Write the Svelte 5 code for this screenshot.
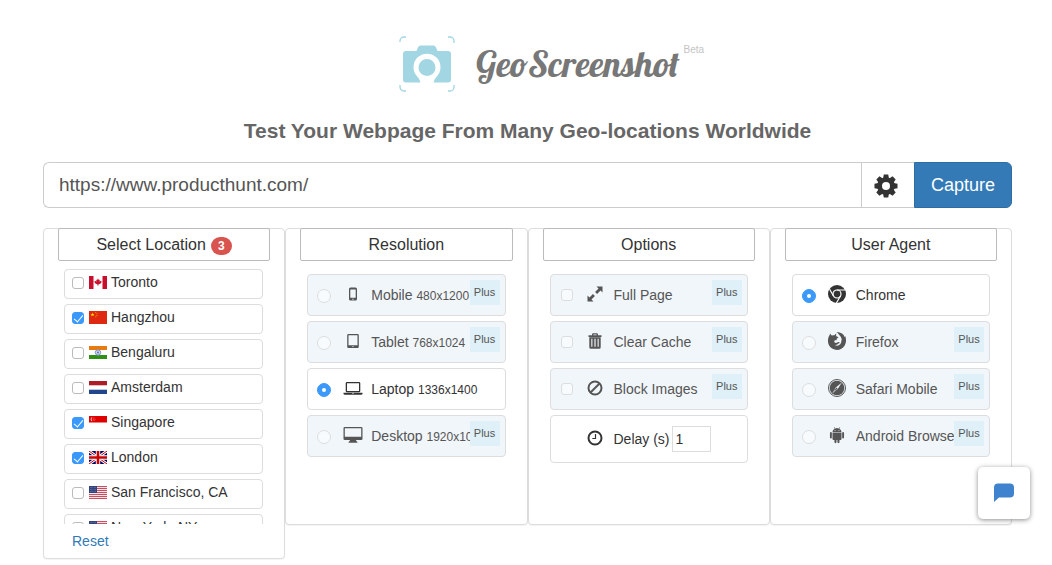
<script>
  let url = $state('https://www.producthunt.com/');
  let delay = $state('1');
  let resolution = $state('laptop');
  let agent = $state('chrome');

  let locations = $state([
    { name: 'Toronto', flag: 'ca', checked: false },
    { name: 'Hangzhou', flag: 'cn', checked: true },
    { name: 'Bengaluru', flag: 'in', checked: false },
    { name: 'Amsterdam', flag: 'nl', checked: false },
    { name: 'Singapore', flag: 'sg', checked: true },
    { name: 'London', flag: 'gb', checked: true },
    { name: 'San Francisco, CA', flag: 'us', checked: false },
    { name: 'New York, NY', flag: 'us', checked: false }
  ]);

  const resolutions = [
    { id: 'mobile', name: 'Mobile', size: '480x1200', plus: true },
    { id: 'tablet', name: 'Tablet', size: '768x1024', plus: true },
    { id: 'laptop', name: 'Laptop', size: '1336x1400', plus: false },
    { id: 'desktop', name: 'Desktop', size: '1920x1080', plus: true }
  ];

  const options = [
    { id: 'expand', name: 'Full Page' },
    { id: 'trash', name: 'Clear Cache' },
    { id: 'ban', name: 'Block Images' }
  ];

  const agents = [
    { id: 'chrome', name: 'Chrome', plus: false },
    { id: 'firefox', name: 'Firefox', plus: true },
    { id: 'safari', name: 'Safari Mobile', plus: true },
    { id: 'android', name: 'Android Browser', plus: true }
  ];

  const selected = $derived(locations.filter((l) => l.checked).length);

  function reset() {
    locations.forEach((l) => (l.checked = false));
  }
</script>

{#snippet flag(code)}
  <svg class="flag" viewBox="0 0 18 13" aria-hidden="true">
    {#if code === 'ca'}
      <rect width="18" height="13" fill="#fff" />
      <path d="M0 0h4.5v13H0zM13.500 0H18v13h-4.500z" fill="#c8102e" />
      <path d="M9 2.500l.9 1.600.9-.4-.3 2 1.300-.9.9.9-.8 1.500-2.300 1.300H9.300V10h-.6V8.500H8.400L6.100 7.200l-.8-1.500.9-.9 1.300.9-.3-2 .9.4z" fill="#c8102e" />
    {:else if code === 'cn'}
      <rect width="18" height="13" fill="#de2910" />
      <path d="M3.500 1.500l.5 1.400h1.500L4.300 3.800l.5 1.500-1.300-.9-1.300.9.5-1.500-1.200-.9H3z" fill="#ffde00" />
      <g fill="#ffb000">
        <circle cx="6.800" cy="1.500" r=".5" /><circle cx="8" cy="2.800" r=".5" />
        <circle cx="8" cy="4.400" r=".5" /><circle cx="6.800" cy="5.700" r=".5" />
      </g>
    {:else if code === 'in'}
      <rect width="18" height="13" fill="#fff" />
      <path d="M0 0h18v4H0z" fill="#e77b10" />
      <path d="M0 9h18v4H0z" fill="#2f9014" />
      <circle cx="9" cy="6.500" r="2.700" fill="#cfd6ee" stroke="#7d8fc6" stroke-width="1" />
      <circle cx="9" cy="6.500" r="1" fill="#5a70b5" />
    {:else if code === 'nl'}
      <rect width="18" height="13" fill="#fff" />
      <path d="M0 0h18v4.300H0z" fill="#ae1c28" />
      <path d="M0 8.700h18V13H0z" fill="#21468b" />
    {:else if code === 'sg'}
      <rect width="18" height="13" fill="#fff" />
      <path d="M0 0h18v6.500H0z" fill="#df0000" />
      <path d="M3.700 1.200a2.100 2.100 0 1 0 0 4.200 2.400 2.400 0 0 1 0-4.200z" fill="#fff" />
      <g fill="#fff"><circle cx="5" cy="1.900" r=".4" /><circle cx="4.300" cy="3.100" r=".4" /><circle cx="6" cy="3.100" r=".4" /><circle cx="5.100" cy="4.600" r=".4" /></g>
    {:else if code === 'gb'}
      <rect width="18" height="13" fill="#006" />
      <path d="M0 0l18 13M18 0L0 13" stroke="#fff" stroke-width="2.800" />
      <path d="M0 0l18 13M18 0L0 13" stroke="#c00" stroke-width="1" />
      <path d="M9 0v13M0 6.500h18" stroke="#fff" stroke-width="4.400" />
      <path d="M9 0v13M0 6.500h18" stroke="#c00" stroke-width="2.600" />
    {:else}
      <rect width="18" height="13" fill="#f3e3e6" />
      <path d="M0 .5h18M0 2.500h18M0 4.500h18M0 6.500h18M0 8.500h18M0 10.500h18M0 12.500h18" stroke="#c64f61" stroke-width="1" />
      <path d="M0 0h8v7H0z" fill="#33437d" />
      <path d="M1 1.500h6M1 3.500h6M1 5.500h6" stroke="#8e97bb" stroke-width=".6" stroke-dasharray=".6 .7" />
    {/if}
  </svg>
{/snippet}

{#snippet icon(name)}
  <svg class="icon" viewBox="0 0 20 20" fill="currentColor" aria-hidden="true">
    {#if name === 'mobile'}
      <path fill-rule="evenodd" d="M7.500 3.500h5a1.500 1.500 0 0 1 1.500 1.500v10a1.500 1.500 0 0 1-1.500 1.500h-5A1.500 1.500 0 0 1 6 15V5a1.500 1.500 0 0 1 1.500-1.500zM7.300 5.500v8.300h5.400V5.500zM10 14.500a.6.6 0 1 0 0 1.300.6.6 0 0 0 0-1.300z" />
    {:else if name === 'tablet'}
      <path fill-rule="evenodd" d="M5.500 3h9A1.300 1.300 0 0 1 15.800 4.300v11.400a1.300 1.300 0 0 1-1.300 1.300h-9a1.300 1.300 0 0 1-1.300-1.300V4.300A1.300 1.300 0 0 1 5.500 3zM5.500 4.300v9.900h9V4.300zM10 15a.6.6 0 1 0 0 1.200.6.6 0 0 0 0-1.200z" />
    {:else if name === 'laptop'}
      <path fill-rule="evenodd" d="M4 4h12a1.300 1.300 0 0 1 1.300 1.300V13a1.300 1.300 0 0 1-1.300 1.300H4A1.300 1.300 0 0 1 2.700 13V5.300A1.300 1.300 0 0 1 4 4zm0 1.300V13h12V5.300zM.5 14.700h19v1q0 1-1.500 1H2q-1.500 0-1.500-1zm8.500.5v.5h2v-.5z" />
    {:else if name === 'desktop'}
      <path fill-rule="evenodd" d="M1.800 2h16.400a1.300 1.300 0 0 1 1.300 1.300v10.400a1.300 1.300 0 0 1-1.300 1.300H13q0 1 .8 1.400.6.3.6.8v.6H5.600v-.6q0-.5.6-.8Q7 16 7 15H1.800A1.300 1.300 0 0 1 .5 13.700V3.300A1.300 1.300 0 0 1 1.800 2zm0 1.300v8.400h16.400V3.300z" />
    {:else if name === 'expand'}
      <path d="M11.500 2.500h6v6l-2-2-3.400 3.400-2-2 3.400-3.400zM8.500 17.500h-6v-6l2 2 3.400-3.400 2 2-3.400 3.400z" />
    {:else if name === 'trash'}
      <path fill-rule="evenodd" d="M7 4.300V3.500q0-1.300 1.300-1.300h3.400q1.300 0 1.300 1.300v.8h3.500v1.600h-13V4.300zm1.400 0h3.200v-.8H8.400z" />
      <path fill-rule="evenodd" d="M4.300 6.300h11.400v9.900a1.500 1.500 0 0 1-1.500 1.500H5.800a1.500 1.500 0 0 1-1.500-1.500zM6.300 7.800v7.900h1.100V7.800zm3.100 0v7.900h1.200V7.800zm3.200 0v7.900h1.100V7.800z" />
    {:else if name === 'ban'}
      <circle cx="10" cy="10" r="6.500" fill="none" stroke="currentColor" stroke-width="2" />
      <path d="M5.500 14.500l9-9" stroke="currentColor" stroke-width="2" />
    {:else if name === 'clock'}
      <circle cx="10" cy="10" r="6.500" fill="none" stroke="currentColor" stroke-width="2" />
      <path d="M10.500 6v4.500H7.300" fill="none" stroke="currentColor" stroke-width="1.200" />
    {:else if name === 'chrome'}
      <circle cx="10" cy="10" r="9" />
      <circle cx="10" cy="10" r="4" fill="none" stroke="#fff" stroke-width="1.200" />
      <path d="M10 6h8.200M6.500 12L2.600 5.200M13.500 12l-4.100 7" stroke="#fff" stroke-width="1.200" />
    {:else if name === 'firefox'}
      <path d="M3.300 2.500q.4 1.500 1.600 2 1.300-.6 2.600-.2Q8 3.100 9.600 2.600q-1 1.500-.2 2.600.6.7 2 .7.2.9-1.700 1.900-.2.900.2 1.500-1.300-.5-2.300.3-.8.900.1 1.900 1.400.9 3-.2 1.600-.7 2 .4-.2.500-.9.600-1.500 2-4 1.700 3 1.600 5.400-.7 1.700-1.900.9-4.600.6.300.9.900.2-2.900-3.300-6.300Q10.500 1.600 9.500 1q3-.2 5.500 1.600 2 1.400 2.700 3.600l.5-1.200q1.200 3 .7 6.100-.8 4.500-4.500 6.700-4.700 2.500-9.300-.3Q1.500 15.100 1 11q-.3-3 .8-5.400Q2.700 3.800 3.300 2.500z" />
    {:else if name === 'safari'}
      <circle cx="10" cy="10" r="8.500" fill="none" stroke="currentColor" stroke-width="1" />
      <circle cx="10" cy="10" r="7.300" />
      <path d="M14.800 4.500l-3.900 6.300-5.700 4.700 3.900-6.300z" fill="#f1f6fa" />
      <path d="M9.500 9.600l1.100.9-4.200 3.800z" fill="currentColor" />
    {:else if name === 'android'}
      <path d="M6.800 2.200l.9 1.500Q5.500 4.800 5.500 7h9q0-2.200-2.200-3.300l.9-1.500-.4-.2-.9 1.500a5 5 0 0 0-3.800 0L7.200 2z" />
      <path d="M5.500 7.500h9v6.400q0 1-1 1h-1v2.200a1 1 0 0 1-2.100 0v-2.200h-.9v2.200a1 1 0 0 1-2.100 0v-2.200h-.9q-1 0-1-1z" />
      <path d="M3.900 8v4.500M16.100 8v4.500" stroke="currentColor" stroke-width="1.900" stroke-linecap="round" />
      <path d="M7.600 5h.9v.8h-.9zM11.500 5h.9v.8h-.9z" fill="#f1f6fa" />
    {/if}
  </svg>
{/snippet}

<main>
  <header class="logo">
    <svg class="logo-mark" viewBox="0 0 56 56" aria-hidden="true">
      <path d="M1 6V5a4 4 0 0 1 4-4h2M49 1h2a4 4 0 0 1 4 4v2M55 49v2a4 4 0 0 1-4 4h-2M7 55H5a4 4 0 0 1-4-4v-2" fill="none" stroke="#a1d6e2" stroke-width="1.300" />
      <path d="M7 15h10.500l1.700-4q.7-1.500 2.300-1.500h13q1.600 0 2.300 1.500l1.700 4H49a3 3 0 0 1 3 3v25.500a3 3 0 0 1-3 3H34.500q1-4 4.500-7.500a13.500 13.500 0 1 0-22 0q3.500 3.500 4.500 7.500H7a3 3 0 0 1-3-3V18a3 3 0 0 1 3-3z" fill="#a1d6e2" />
      <circle cx="28" cy="31.500" r="8.500" fill="#a1d6e2" />
    </svg>
    <span class="wordmark">GeoScreenshot</span>
    <sup class="beta">Beta</sup>
  </header>

  <h1>Test Your Webpage From Many Geo-locations Worldwide</h1>

  <form class="search" onsubmit={(e) => e.preventDefault()}>
    <input type="text" aria-label="Webpage URL" bind:value={url} />
    <button type="button" class="settings" aria-label="Settings">
      <svg viewBox="0 0 24 24" aria-hidden="true">
        <g fill="#333">
          {#each [0, 45, 90, 135] as angle}
            <path d="M9.800.5h4.400l.8 4v15l-.8 4H9.800l-.8-4v-15z" transform="rotate({angle} 12 12)" />
          {/each}
          <circle cx="12" cy="12" r="8.800" />
        </g>
        <circle cx="12" cy="12" r="4" fill="#fff" />
      </svg>
    </button>
    <button type="submit" class="capture">Capture</button>
  </form>

  <div class="panels">
    <section class="panel">
      <h2>Select Location <span class="count">{selected}</span></h2>
      <ul class="locations">
        {#each locations as location}
          <li>
            <label>
              <input type="checkbox" bind:checked={location.checked} />
              {@render flag(location.flag)}
              <span>{location.name}</span>
            </label>
          </li>
        {/each}
      </ul>
      <button type="button" class="reset" onclick={reset}>Reset</button>
    </section>

    <section class="panel">
      <h2>Resolution</h2>
      <ul class="choices">
        {#each resolutions as item}
          <li>
            <label class="choice" class:locked={item.plus}>
              <input type="radio" name="resolution" value={item.id} disabled={item.plus} bind:group={resolution} />
              {@render icon(item.id)}
              <span class="name">{item.name} <small>{item.size}</small></span>
              {#if item.plus}<span class="plus">Plus</span>{/if}
            </label>
          </li>
        {/each}
      </ul>
    </section>

    <section class="panel">
      <h2>Options</h2>
      <ul class="choices">
        {#each options as item}
          <li>
            <label class="choice locked">
              <input type="checkbox" disabled />
              {@render icon(item.id)}
              <span class="name">{item.name}</span>
              <span class="plus">Plus</span>
            </label>
          </li>
        {/each}
        <li>
          <div class="choice delay">
            {@render icon('clock')}
            <label for="delay">Delay (s)</label>
            <input id="delay" type="text" inputmode="numeric" bind:value={delay} />
          </div>
        </li>
      </ul>
    </section>

    <section class="panel">
      <h2>User Agent</h2>
      <ul class="choices">
        {#each agents as item}
          <li>
            <label class="choice" class:locked={item.plus}>
              <input type="radio" name="agent" value={item.id} disabled={item.plus} bind:group={agent} />
              {@render icon(item.id)}
              <span class="name">{item.name}</span>
              {#if item.plus}<span class="plus">Plus</span>{/if}
            </label>
          </li>
        {/each}
      </ul>
    </section>
  </div>
</main>

<button type="button" class="chat" aria-label="Open chat">
  <svg viewBox="0 0 20 20" aria-hidden="true">
    <path d="M4 .5h12a4 4 0 0 1 4 4v6a4 4 0 0 1-4 4H5L0 19V4.500a4 4 0 0 1 4-4z" fill="#3f82cd" />
  </svg>
</button>

<style>
:global(body) {
  margin: 0;
  background: #fff;
  overflow-x: hidden;
}

main,
.chat {
  font-family: "Helvetica Neue", "Liberation Sans", Arial, sans-serif;
  font-size: 14px;
  line-height: 20px;
  color: #333;
}

main {
  padding: 36px 40px 6px 43px;
}

main *,
.chat {
  box-sizing: border-box;
}

button,
input {
  font: inherit;
  color: inherit;
  margin: 0;
}

button {
  cursor: pointer;
}

ul {
  list-style: none;
  margin: 0;
  padding: 0;
}

/* ===== Logo ===== */
.logo {
  display: flex;
  justify-content: center;
  padding-left: 48px;
}

.logo-mark {
  width: 56px;
  height: 56px;
  margin-right: 21px;
}

.wordmark {
  font-family: Lobster, "Liberation Serif", serif;
  font-size: 36px;
  font-weight: 400;
  line-height: 56px;
  color: #777;
}

.beta {
  margin-left: 4px;
  font-size: 10px;
  line-height: 28px;
  color: #c4c4c4;
}

h1 {
  margin: 24px 0 16px;
  font-size: 21px;
  font-weight: 700;
  line-height: 30px;
  text-align: center;
  color: #666;
}

/* ===== Search bar ===== */
.search {
  display: flex;
  height: 46px;
}

.search input {
  flex: 1;
  min-width: 0;
  padding: 0 15px;
  border: 1px solid #ccc;
  border-right: 0;
  border-radius: 6px 0 0 6px;
  background: #fff;
  font-size: 19px;
  color: #555;
}

.settings {
  display: grid;
  place-items: center;
  width: 53px;
  padding: 2px 4px 0 0;
  border: 1px solid #ccc;
  border-right: 0;
  background: #fff;
}

.settings svg {
  width: 24px;
  height: 24px;
}

.capture {
  width: 98px;
  padding: 0;
  border: 1px solid #2e6da4;
  border-radius: 0 6px 6px 0;
  background: #337ab7;
  font-size: 18px;
  color: #fff;
}

/* ===== Panels ===== */
.panels {
  display: grid;
  grid-template-columns: repeat(4, 1fr);
  align-items: start;
  margin-top: 20px;
}

.panel {
  min-width: 0;
  min-height: 297px;
  border: 1px solid #ddd;
  border-radius: 4px;
  background: #fff;
  box-shadow: 0 1px 1px rgba(0, 0, 0, 0.05);
}

h2 {
  display: flex;
  justify-content: center;
  align-items: center;
  gap: 5px;
  height: 33px;
  margin: -1px 14px 0;
  border: 1px solid #bbb;
  border-radius: 2px;
  font-size: 16px;
  font-weight: 400;
}

.count {
  min-width: 21px;
  margin-top: 2px;
  border-radius: 9px;
  background: #d9534f;
  font-size: 12px;
  font-weight: 700;
  line-height: 18px;
  text-align: center;
  color: #fff;
}

/* ===== Tick boxes and radios ===== */
input[type="checkbox"],
input[type="radio"] {
  appearance: none;
  display: grid;
  place-items: center;
  flex: none;
  width: 12px;
  height: 12px;
  border: 1px solid #bbb;
  border-radius: 3px;
  background: #fff;
}

input[type="radio"] {
  width: 14px;
  height: 14px;
  margin-top: 2px;
  border-radius: 50%;
}

input[type="checkbox"]:checked,
input[type="radio"]:checked {
  border-color: #3b99fc;
  background: #3b99fc;
}

input[type="checkbox"]:checked::before {
  content: "";
  width: 4px;
  height: 8px;
  margin-bottom: 2px;
  border: solid #fff;
  border-width: 0 1px 1px 0;
  transform: rotate(40deg);
}

input[type="radio"]:checked::before {
  content: "";
  width: 4px;
  height: 4px;
  border-radius: 50%;
  background: #fff;
}

input[type="checkbox"]:disabled,
input[type="radio"]:disabled {
  border-color: #ddd;
  background: #f8fbfd;
}

/* ===== Locations ===== */
.locations {
  max-height: 263px;
  padding: 8px 21px 0 20px;
  overflow-y: auto;
  scrollbar-width: none;
}

.locations label {
  display: flex;
  align-items: center;
  height: 30px;
  margin-bottom: 5px;
  padding: 0 7px 4px;
  border: 1px solid #ddd;
  border-radius: 4px;
}

.locations input {
  margin-top: 2px;
}

.flag {
  flex: none;
  width: 18px;
  height: 13px;
  margin: 0 4px 0 5px;
}

.reset {
  display: block;
  margin: 7px 28px;
  padding: 0;
  border: 0;
  background: none;
  color: #337ab7;
}

/* ===== Resolution, options, user agent ===== */
.choices {
  display: grid;
  gap: 5px;
  padding: 13px 21px;
}

.choices li {
  min-width: 0;
}

.choice {
  position: relative;
  display: grid;
  grid-template-columns: 14px 26px minmax(0, 1fr);
  align-items: center;
  justify-items: center;
  column-gap: 7px;
  height: 42px;
  padding-left: 9px;
  border: 1px solid #ddd;
  border-radius: 4px;
  overflow: hidden;
}

.locked {
  padding-right: 35px;
  background: #f1f6fa;
  color: #555;
}

.icon {
  width: 20px;
  height: 20px;
  margin: 0 0 2px 3px;
}

.name {
  justify-self: stretch;
  overflow: hidden;
  white-space: nowrap;
}

small {
  font-size: 12px;
}

.plus {
  position: absolute;
  top: 5px;
  right: 5px;
  width: 30px;
  background: #dff0f8;
  font-size: 11px;
  line-height: 25px;
  text-align: center;
}

.delay {
  grid-template-columns: 26px auto 1fr;
  justify-items: start;
  height: 48px;
  padding-left: 30px;
}

.delay .icon {
  justify-self: center;
}

.delay input {
  width: 39px;
  height: 26px;
  margin-left: -5px;
  padding: 0 3px;
  border: 1px solid #ddd;
  background: #fff;
}

/* ===== Chat launcher ===== */
.chat {
  position: fixed;
  right: 22px;
  bottom: 46px;
  display: grid;
  place-items: center;
  width: 52px;
  height: 52px;
  padding: 0;
  border: 0;
  border-radius: 5px;
  background: #fff;
  box-shadow: 0 1px 5px rgba(0, 0, 0, 0.45);
}

.chat svg {
  width: 20px;
  height: 20px;
}
</style>
